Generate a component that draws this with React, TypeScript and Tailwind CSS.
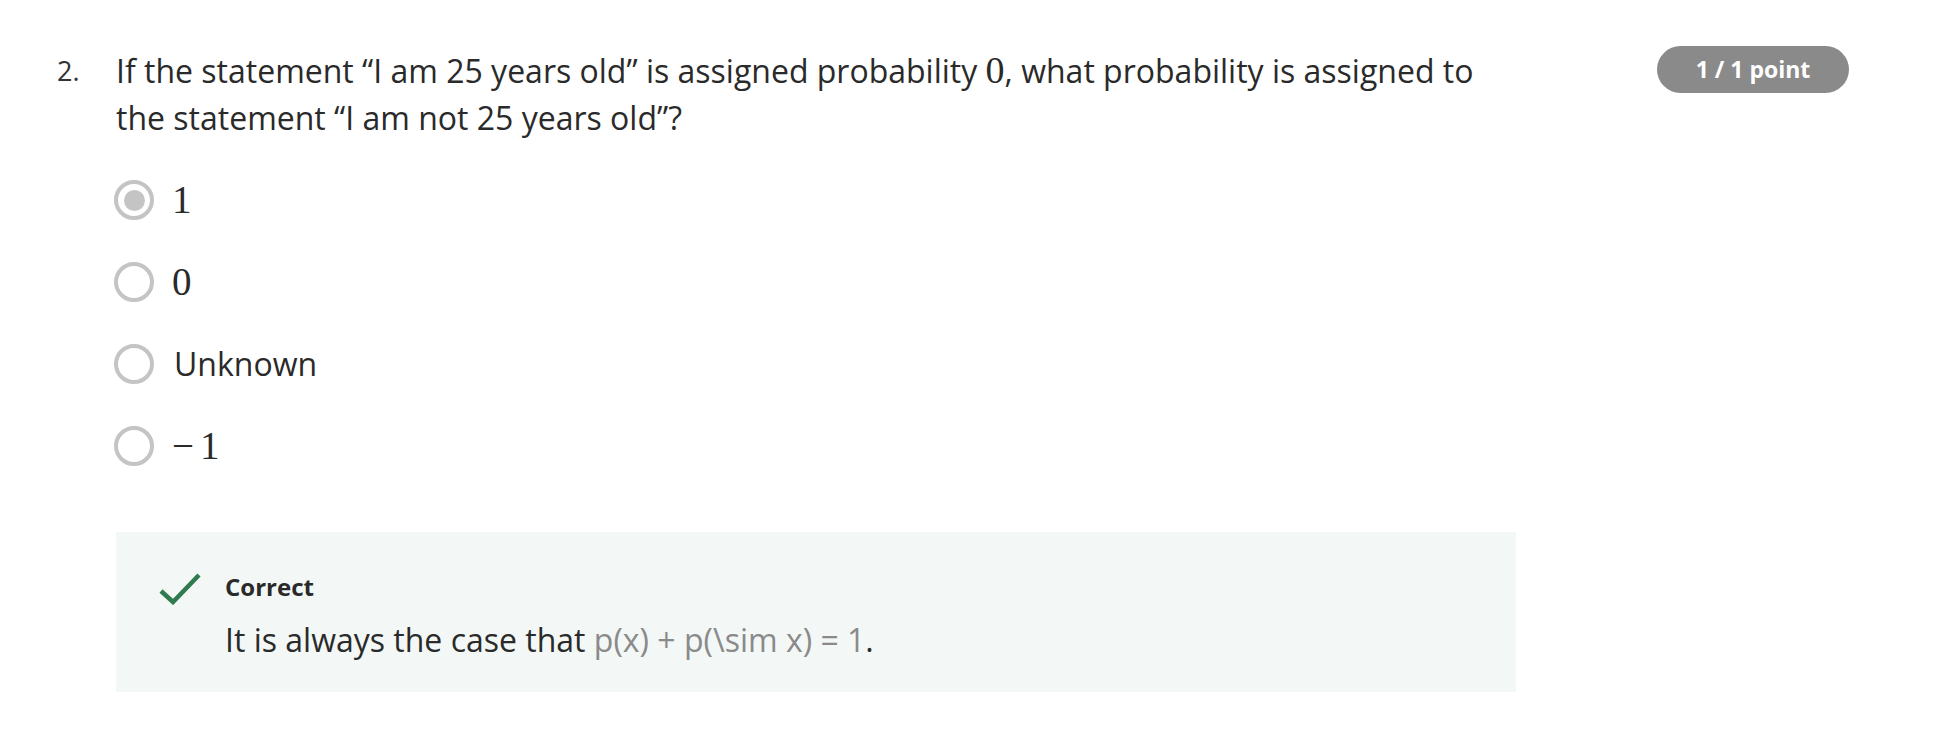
import React from "react";

const sans = "font-['Open_Sans','Noto_Sans',sans-serif]";
const serif = "font-['Liberation_Serif','DejaVu_Serif',serif]";

const options = [
  { label: "1", math: true, checked: true },
  { label: "0", math: true, checked: false },
  { label: "Unknown", math: false, checked: false },
  { label: "\u22121", math: true, checked: false },
];

const Radio = ({ checked }: { checked: boolean }) => (
  <span className="w-[40px] h-[40px] rounded-full border-[4px] border-[#c4c4c4] flex items-center justify-center shrink-0">
    {checked && <span className="w-[21px] h-[21px] rounded-full bg-[#c4c4c4]"></span>}
  </span>
);

export default function App() {
  return (
    <div className={`w-[1954px] h-[734px] bg-white text-[#2a2a2a] ${sans}`}>
      <div className="flex pt-[47px] pl-[57px]">
        <div className="w-[59px] text-[27px] leading-[47px] text-[#333]">2.</div>
        <div className="w-[1400px]">
          <div className="text-[32px] leading-[47px] pr-[20px]">
            If the statement “I am 25 years old” is assigned probability{" "}
            <span className={`${serif} text-[38px]`}>0</span>, what probability is assigned to the
            statement “I am not 25 years old”?
          </div>

          <div className="flex flex-col mt-[18px]">
            {options.map((o) => (
              <label key={o.label} className="flex items-center h-[82px] -ml-[2px]">
                <Radio checked={o.checked} />
                {o.math ? (
                  <span className={`${serif} text-[39px] ml-[18px] text-[#2a2a2a]`}>
                    {o.label.startsWith("\u2212") ? (
                      <>
                        <span className="mr-[6px]">{"\u2212"}</span>
                        {o.label.slice(1)}
                      </>
                    ) : (
                      o.label
                    )}
                  </span>
                ) : (
                  <span className="text-[32px] ml-[20px] text-[#2a2a2a]">{o.label}</span>
                )}
              </label>
            ))}
          </div>

          <div className="mt-[45px] h-[160px] bg-[#f3f8f6] flex pt-[41px] pl-[43px]">
            <svg width="42" height="32" viewBox="0 0 42 32" className="shrink-0">
              <path d="M2 18 L14 29 L40 2" fill="none" stroke="#2f7a4f" strokeWidth="4.5" />
            </svg>
            <div className="ml-[24px] -mt-[1px]">
              <div className="text-[24px] font-bold leading-[30px] text-[#2a2a2a]">Correct</div>
              <div className="text-[32px] leading-[47px] mt-[14px]">
                It is always the case that{" "}
                <span className="text-[#8a8a8a]">p(x) + p(\sim x) = 1</span>.
              </div>
            </div>
          </div>
        </div>

        <div className="ml-[141px] mt-[-1px]">
          <div className="w-[192px] h-[47px] rounded-full bg-[#8a8a8a] text-white text-[23px] font-bold flex items-center justify-center">
            1 / 1 point
          </div>
        </div>
      </div>
    </div>
  );
}
